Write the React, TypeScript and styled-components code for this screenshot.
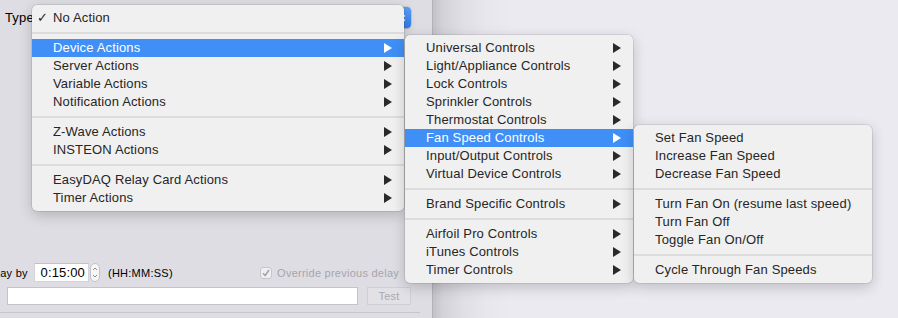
import React from "react";
import styled, { createGlobalStyle } from "styled-components";

const GlobalStyle = createGlobalStyle`
  html, body { margin: 0; padding: 0; }
  body {
    font-family: "Liberation Sans", Arial, sans-serif;
    background: #ebeaf1;
  }
`;

const Desktop = styled.div`
  position: relative;
  width: 898px;
  height: 318px;
  display: flex;
  overflow: hidden;
  background: #ebeaf1;
  font-size: 13px;
`;

const Window = styled.div`
  flex: none;
  width: 433px;
  height: 100%;
  box-sizing: border-box;
  background: #dedde3;
  border-right: 1px solid #b3b2b8;
  display: flex;
  flex-direction: column;
  padding-bottom: 5px;
  overflow: hidden;
  color: #000;
  font-size: 11px;
  letter-spacing: 0.25px;
`;

const Shade = styled.div`
  flex: 1;
  background: linear-gradient(
    to right,
    #c3c2c8 0px,
    #d3d2d8 10px,
    #e0dfe6 30px,
    #e8e7ee 55px,
    #ebeaf1 80px
  );
`;

const TypeRow = styled.div`
  display: flex;
  align-items: center;
  height: 21px;
  margin-top: 7px;
  font-size: 13px;
  letter-spacing: 0.15px;
`;

const TypeLabel = styled.span`
  flex: none;
  width: 38px;
  padding-left: 5px;
  box-sizing: border-box;
`;

const Popup = styled.div`
  flex: none;
  width: 373px;
  height: 21px;
  background: #fff;
  border-radius: 4px;
  box-shadow: 0 0 0 0.5px rgba(0, 0, 0, 0.2), 0 1px 1px rgba(0, 0, 0, 0.12);
  display: flex;
  justify-content: flex-end;
  overflow: hidden;
`;

const PopupCap = styled.div`
  width: 17px;
  height: 100%;
  background: linear-gradient(#5aa0f8, #2f7ff0);
  display: flex;
  align-items: center;
  justify-content: center;
`;

const Spacer = styled.div`
  flex: 1;
`;

const DelayRow = styled.div`
  display: flex;
  align-items: center;
  height: 19px;
`;

const DelayLabel = styled.span`
  flex: none;
  width: 51px;
  margin-left: -17px;
`;

const TimeField = styled.div`
  flex: none;
  width: 55px;
  height: 19px;
  box-sizing: border-box;
  background: #fff;
  border: 1px solid #d3d2d7;
  border-top-color: #c2c1c6;
  text-align: right;
  padding-right: 3px;
  line-height: 17px;
  font-size: 13px;
  letter-spacing: 0.15px;
`;

const Stepper = styled.div`
  flex: none;
  margin-left: 1px;
  width: 10px;
  height: 19px;
  box-sizing: border-box;
  border-radius: 5px;
  background: #f6f6f7;
  border: 1px solid #c3c2c7;
  display: flex;
  align-items: center;
  justify-content: center;
`;

const Units = styled.span`
  margin-left: 8px;
`;

const CheckGroup = styled.label`
  margin-left: auto;
  margin-right: 33px;
  display: flex;
  align-items: center;
  gap: 5px;
  color: #a6a5ab;
`;

const CheckBox = styled.span`
  width: 12px;
  height: 12px;
  box-sizing: border-box;
  border-radius: 3px;
  background: #efeff1;
  border: 1px solid #c6c5ca;
  display: flex;
  align-items: center;
  justify-content: center;
`;

const FieldRow = styled.div`
  display: flex;
  align-items: center;
  height: 18px;
  margin-top: 5px;
  padding-left: 7px;
`;

const TextField = styled.div`
  flex: none;
  width: 351px;
  height: 18px;
  box-sizing: border-box;
  background: #fff;
  border: 1px solid #c4c3c8;
`;

const TestButton = styled.div`
  flex: none;
  margin-left: 9px;
  width: 44px;
  height: 18px;
  box-sizing: border-box;
  border: 1px solid #d0cfd4;
  background: #e2e1e6;
  color: #aaa9ae;
  text-align: center;
  line-height: 16px;
`;

const Divider = styled.div`
  margin-top: 7px;
  width: 420px;
  height: 1px;
  background: #c7c6cb;
`;

const Menu = styled.div<{ $left: number; $top: number; $width: number }>`
  position: absolute;
  left: ${(p) => p.$left}px;
  top: ${(p) => p.$top}px;
  width: ${(p) => p.$width}px;
  padding: 4px 0;
  background: #f0f0f0;
  border-radius: 5px;
  box-shadow: 0 0 0 0.5px rgba(0, 0, 0, 0.16), 0 4px 14px rgba(0, 0, 0, 0.2);
  font-family: "Liberation Sans", Arial, sans-serif;
  font-size: 13px;
  letter-spacing: 0.15px;
  color: #262626;
`;

const Item = styled.div<{ $active?: boolean }>`
  display: flex;
  align-items: center;
  height: 18px;
  line-height: 18px;
  padding-right: 12px;
  background: ${(p) => (p.$active ? "#3f8ff7" : "transparent")};
  color: ${(p) => (p.$active ? "#fff" : "#262626")};
  white-space: nowrap;
`;

const CheckCol = styled.span`
  flex: none;
  width: 21px;
  padding-left: 5px;
  box-sizing: border-box;
  font-family: "DejaVu Sans", sans-serif;
  font-size: 13px;
  letter-spacing: 0;
`;

const ItemLabel = styled.span`
  flex: 1;
`;

const Separator = styled.div`
  height: 2px;
  margin: 5px 0;
  background: #dcdcdc;
`;

type Entry = { label: string; sub?: boolean; active?: boolean; checked?: boolean } | "sep";

const mainItems: Entry[] = [
  { label: "No Action", checked: true },
  "sep",
  { label: "Device Actions", sub: true, active: true },
  { label: "Server Actions", sub: true },
  { label: "Variable Actions", sub: true },
  { label: "Notification Actions", sub: true },
  "sep",
  { label: "Z-Wave Actions", sub: true },
  { label: "INSTEON Actions", sub: true },
  "sep",
  { label: "EasyDAQ Relay Card Actions", sub: true },
  { label: "Timer Actions", sub: true },
];

const deviceItems: Entry[] = [
  { label: "Universal Controls", sub: true },
  { label: "Light/Appliance Controls", sub: true },
  { label: "Lock Controls", sub: true },
  { label: "Sprinkler Controls", sub: true },
  { label: "Thermostat Controls", sub: true },
  { label: "Fan Speed Controls", sub: true, active: true },
  { label: "Input/Output Controls", sub: true },
  { label: "Virtual Device Controls", sub: true },
  "sep",
  { label: "Brand Specific Controls", sub: true },
  "sep",
  { label: "Airfoil Pro Controls", sub: true },
  { label: "iTunes Controls", sub: true },
  { label: "Timer Controls", sub: true },
];

const fanItems: Entry[] = [
  { label: "Set Fan Speed" },
  { label: "Increase Fan Speed" },
  { label: "Decrease Fan Speed" },
  "sep",
  { label: "Turn Fan On (resume last speed)" },
  { label: "Turn Fan Off" },
  { label: "Toggle Fan On/Off" },
  "sep",
  { label: "Cycle Through Fan Speeds" },
];

const Arrow = ({ color }: { color: string }) => (
  <svg width="8" height="10" viewBox="0 0 8 10">
    <polygon points="0,0 8,5 0,10" fill={color} />
  </svg>
);

const MenuList = ({
  items,
  left,
  top,
  width,
}: {
  items: Entry[];
  left: number;
  top: number;
  width: number;
}) => (
  <Menu $left={left} $top={top} $width={width}>
    {items.map((it, i) =>
      it === "sep" ? (
        <Separator key={i} />
      ) : (
        <Item key={i} $active={it.active}>
          <CheckCol>{it.checked ? "✓" : ""}</CheckCol>
          <ItemLabel>{it.label}</ItemLabel>
          {it.sub && <Arrow color={it.active ? "#ffffff" : "#2a2a2a"} />}
        </Item>
      )
    )}
  </Menu>
);

export default function App() {
  return (
    <>
      <GlobalStyle />
      <Desktop>
        <Window>
          <TypeRow>
            <TypeLabel>Type:</TypeLabel>
            <Popup>
              <PopupCap>
                <svg width="7" height="12" viewBox="0 0 7 12">
                  <path d="M1 4.5 L3.5 2 L6 4.5 M1 7.5 L3.5 10 L6 7.5" stroke="#fff" strokeWidth="1.3" fill="none" />
                </svg>
              </PopupCap>
            </Popup>
          </TypeRow>
          <Spacer />
          <DelayRow>
            <DelayLabel>Delay by</DelayLabel>
            <TimeField>0:15:00</TimeField>
            <Stepper>
              <svg width="6" height="13" viewBox="0 0 6 13">
                <path d="M1 4 L3 2 L5 4 M1 9 L3 11 L5 9" stroke="#8e8e92" strokeWidth="1" fill="none" />
              </svg>
            </Stepper>
            <Units>(HH:MM:SS)</Units>
            <CheckGroup>
              <CheckBox>
                <svg width="8" height="8" viewBox="0 0 8 8">
                  <path d="M1 4.2 L3.2 6.5 L7 1" stroke="#a3a2a7" strokeWidth="1.5" fill="none" />
                </svg>
              </CheckBox>
              Override previous delay
            </CheckGroup>
          </DelayRow>
          <FieldRow>
            <TextField />
            <TestButton>Test</TestButton>
          </FieldRow>
          <Divider />
        </Window>
        <Shade />
        <MenuList items={mainItems} left={32} top={5} width={372} />
        <MenuList items={deviceItems} left={405} top={35} width={228} />
        <MenuList items={fanItems} left={634} top={125} width={238} />
      </Desktop>
    </>
  );
}
